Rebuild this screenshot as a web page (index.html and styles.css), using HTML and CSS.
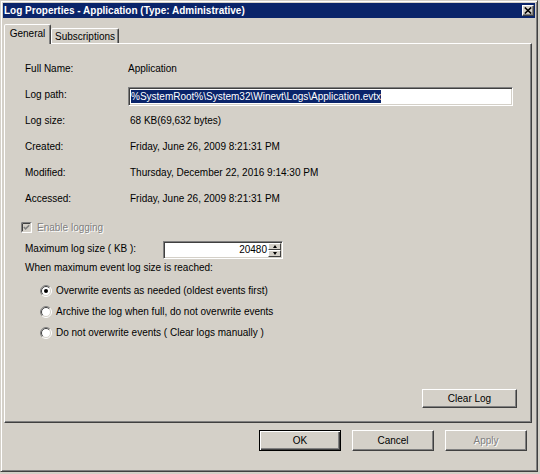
FILE: index.html
```html
<!DOCTYPE html>
<html>
<head>
<meta charset="utf-8">
<link rel="stylesheet" href="styles.css">
</head>
<body>
<div class="window">
  <div class="titlebar">
    <span class="title">Log Properties - Application (Type: Administrative)</span>
    <span class="close"><svg width="8" height="7" viewBox="0 0 8 7"><path d="M0.8 0.5 L7.2 6.5 M7.2 0.5 L0.8 6.5" stroke="#000" stroke-width="1.6" fill="none"/></svg></span>
  </div>
  <div class="body">
    <div class="tabs">
      <div class="tab active">General</div>
      <div class="tab">Subscriptions</div>
    </div>
    <div class="panel">
      <div class="info">
        <div class="lbl">Full Name:</div><div class="val name">Application</div>
        <div class="lbl">Log path:</div><div class="val"><div class="textbox"><span class="sel">%SystemRoot%\System32\Winevt\Logs\Application.evtx</span></div></div>
        <div class="lbl">Log size:</div><div class="val">68 KB(69,632 bytes)</div>
        <div class="lbl">Created:</div><div class="val">Friday, June 26, 2009 8:21:31 PM</div>
        <div class="lbl">Modified:</div><div class="val">Thursday, December 22, 2016 9:14:30 PM</div>
        <div class="lbl">Accessed:</div><div class="val">Friday, June 26, 2009 8:21:31 PM</div>
      </div>
      <div class="check-row">
        <svg class="checkbox" width="11" height="11" viewBox="0 0 11 11">
          <rect x="0" y="0" width="11" height="11" fill="#fff"/>
          <path d="M0.5 10.5 V0.5 H10.5" stroke="#808080" fill="none"/>
          <path d="M1.5 9.5 V1.5 H9.5" stroke="#404040" fill="none"/>
          <path d="M1.5 9.5 H9.5 V1.5" stroke="#d4d0c8" fill="none"/>
          <rect x="2" y="2" width="7" height="7" fill="#d4d0c8"/>
          <path d="M2.8 5 L4.6 6.8 L8.2 3.2" stroke="#808080" stroke-width="1.6" fill="none"/>
        </svg>
        <span class="disabled">Enable logging</span>
      </div>
      <div class="max-row">
        <span class="max-lbl">Maximum log size ( KB ):</span>
        <div class="spin">
          <span class="spin-val">20480</span>
          <div class="spin-btns">
            <div class="sb"><span class="arrow up"></span></div>
            <div class="sb"><span class="arrow down"></span></div>
          </div>
        </div>
      </div>
      <div class="when">When maximum event log size is reached:</div>
      <div class="radios">
        <div class="radio-row">
          <svg class="radio" width="12" height="12" viewBox="0 0 12 12">
            <circle cx="6" cy="6" r="5" fill="#fff"/>
            <path d="M2.1 9.9 A5.5 5.5 0 0 1 9.9 2.1" stroke="#808080" fill="none"/>
            <path d="M9.9 2.1 A5.5 5.5 0 0 1 2.1 9.9" stroke="#fff" fill="none"/>
            <path d="M2.8 9.2 A4.5 4.5 0 0 1 9.2 2.8" stroke="#404040" fill="none"/>
            <path d="M9.2 2.8 A4.5 4.5 0 0 1 2.8 9.2" stroke="#d4d0c8" fill="none"/>
            <circle cx="6" cy="6" r="2" fill="#000"/>
          </svg>
          <span>Overwrite events as needed (oldest events first)</span>
        </div>
        <div class="radio-row">
          <svg class="radio" width="12" height="12" viewBox="0 0 12 12">
            <circle cx="6" cy="6" r="5" fill="#fff"/>
            <path d="M2.1 9.9 A5.5 5.5 0 0 1 9.9 2.1" stroke="#808080" fill="none"/>
            <path d="M9.9 2.1 A5.5 5.5 0 0 1 2.1 9.9" stroke="#fff" fill="none"/>
            <path d="M2.8 9.2 A4.5 4.5 0 0 1 9.2 2.8" stroke="#404040" fill="none"/>
            <path d="M9.2 2.8 A4.5 4.5 0 0 1 2.8 9.2" stroke="#d4d0c8" fill="none"/>
          </svg>
          <span>Archive the log when full, do not overwrite events</span>
        </div>
        <div class="radio-row">
          <svg class="radio" width="12" height="12" viewBox="0 0 12 12">
            <circle cx="6" cy="6" r="5" fill="#fff"/>
            <path d="M2.1 9.9 A5.5 5.5 0 0 1 9.9 2.1" stroke="#808080" fill="none"/>
            <path d="M9.9 2.1 A5.5 5.5 0 0 1 2.1 9.9" stroke="#fff" fill="none"/>
            <path d="M2.8 9.2 A4.5 4.5 0 0 1 9.2 2.8" stroke="#404040" fill="none"/>
            <path d="M9.2 2.8 A4.5 4.5 0 0 1 2.8 9.2" stroke="#d4d0c8" fill="none"/>
          </svg>
          <span>Do not overwrite events ( Clear logs manually )</span>
        </div>
      </div>
      <div class="clear-row"><div class="btn clear">Clear Log</div></div>
    </div>
    <div class="buttons">
      <div class="btn default">OK</div>
      <div class="btn">Cancel</div>
      <div class="btn disabled-btn"><span class="disabled">Apply</span></div>
    </div>
  </div>
</div>
</body>
</html>
```

FILE: styles.css
```css
html, body {
  margin: 0;
  padding: 0;
}
body {
  background: #d4d0c8;
  font-family: "Liberation Sans", Arial, sans-serif;
  font-size: 10px;
  color: #000;
  width: 540px;
  height: 474px;
  overflow: hidden;
}
.window {
  width: 538px;
  height: 472px;
  box-sizing: border-box;
  border: 1px solid;
  border-color: #d4d0c8 #404040 #404040 #d4d0c8;
  box-shadow: inset 1px 1px #fff, inset -1px -1px #808080;
  padding: 1px 2px 2px 2px;
  display: flex;
  flex-direction: column;
  background: #d4d0c8;
}
.titlebar {
  height: 15px;
  background: #0a246a;
  color: #fff;
  font-weight: bold;
  display: flex;
  align-items: center;
  justify-content: space-between;
  padding: 0 1px 0 1px;
  margin-top: 1px;
}
.title {
  line-height: 15px;
  white-space: nowrap;
}
.close {
  width: 12px;
  height: 11px;
  box-sizing: border-box;
  background: #d4d0c8;
  border: 1px solid;
  border-color: #fff #404040 #404040 #fff;
  box-shadow: inset -1px -1px #808080;
  display: flex;
  align-items: center;
  justify-content: center;
}
.close svg {
  display: block;
}
.body {
  flex: 1;
  display: flex;
  flex-direction: column;
  padding: 6px 3px 0 1px;
}
.tabs {
  display: flex;
  align-items: flex-end;
  height: 20px;
  margin-bottom: -1px;
  position: relative;
  z-index: 1;
}
.tab {
  height: 15px;
  margin-bottom: 1px;
  box-sizing: border-box;
  border: 1px solid;
  border-bottom: none;
  border-color: #fff #404040 transparent #fff;
  box-shadow: inset -1px 0 #808080;
  border-radius: 2px 2px 0 0;
  display: flex;
  align-items: center;
  justify-content: center;
  width: 68px;
  background: #d4d0c8;
  padding-top: 1px;
}
.tab.active {
  height: 20px;
  width: 47px;
  margin-bottom: 0;
  padding-top: 0;
  padding-bottom: 3px;
}
.panel {
  height: 380px;
  box-sizing: border-box;
  border: 1px solid;
  border-color: #fff #404040 #404040 #fff;
  box-shadow: inset -1px -1px #808080;
  padding: 11px 14px 14px 20px;
  display: flex;
  flex-direction: column;
}
.info {
  display: grid;
  grid-template-columns: 103px 1fr;
  grid-auto-rows: 26px;
  align-items: center;
}
.val {
  padding-left: 2px;
  white-space: nowrap;
}
.val.name {
  padding-left: 0;
}
.textbox {
  width: 385px;
  height: 19px;
  margin-top: 5px;
  margin-left: -2px;
  box-sizing: border-box;
  background: #fff;
  border: 1px solid;
  border-color: #808080 #fff #fff #808080;
  box-shadow: inset 1px 1px #404040, inset -1px -1px #d4d0c8;
  padding: 0 0 0 2px;
  display: flex;
  align-items: center;
}
.sel {
  background: #0a246a;
  color: #fff;
  line-height: 13px;
  white-space: nowrap;
}
.check-row {
  margin-top: 8px;
  height: 16px;
  display: flex;
  align-items: center;
  margin-left: -4px;
  gap: 5px;
}
.checkbox {
  display: block;
}
.disabled {
  color: #808080;
  text-shadow: 1px 1px 0 #fff;
}
.max-row {
  margin-top: 5px;
  height: 19px;
  display: flex;
  align-items: center;
}
.max-lbl {
  width: 138px;
  margin-top: -2px;
}
.spin {
  width: 120px;
  height: 18px;
  margin-top: 1px;
  box-sizing: border-box;
  background: #fff;
  border: 1px solid;
  border-color: #808080 #fff #fff #808080;
  box-shadow: inset 1px 1px #404040, inset -1px -1px #d4d0c8;
  padding: 1px;
  display: flex;
}
.spin-val {
  flex: 1;
  text-align: right;
  padding-right: 1px;
  line-height: 14px;
}
.spin-btns {
  width: 13px;
  display: flex;
  flex-direction: column;
}
.sb {
  flex: 1;
  box-sizing: border-box;
  background: #d4d0c8;
  border: 1px solid;
  border-color: #fff #404040 #404040 #fff;
  display: flex;
  align-items: center;
  justify-content: center;
}
.arrow {
  width: 0;
  height: 0;
  border-left: 2.5px solid transparent;
  border-right: 2.5px solid transparent;
}
.arrow.up {
  border-bottom: 3px solid #000;
}
.arrow.down {
  border-top: 3px solid #000;
}
.when {
  margin-top: 2px;
  height: 14px;
  line-height: 14px;
}
.radios {
  margin-top: 5px;
  margin-left: 15px;
  display: flex;
  flex-direction: column;
}
.radio-row {
  height: 21px;
  display: flex;
  align-items: center;
  gap: 4px;
}
.radio {
  display: block;
}
.clear-row {
  margin-top: auto;
  display: flex;
  justify-content: flex-end;
}
.btn {
  width: 82px;
  height: 21px;
  box-sizing: border-box;
  background: #d4d0c8;
  border: 1px solid;
  border-color: #fff #404040 #404040 #fff;
  box-shadow: inset -1px -1px #808080;
  display: flex;
  align-items: center;
  justify-content: center;
}
.btn.clear {
  width: 95px;
  height: 19px;
}
.btn.default {
  border-color: #000;
  box-shadow: inset 1px 1px #fff, inset -1px -1px #404040, inset -2px -2px #808080;
}
.buttons {
  margin-top: 7px;
  display: flex;
  justify-content: flex-end;
  gap: 11px;
  padding-right: 5px;
}
```
